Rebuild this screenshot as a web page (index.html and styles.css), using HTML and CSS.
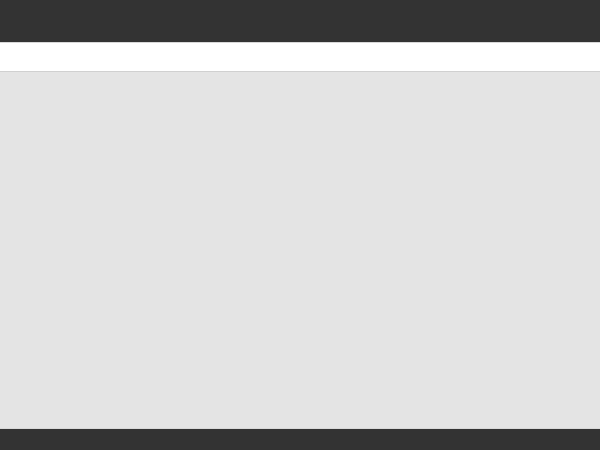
FILE: index.html
```html
<!DOCTYPE html>
<html>
<head>
<meta charset="utf-8">
<link rel="stylesheet" href="styles.css">
</head>
<body>
<div class="page">
  <header class="topbar"></header>
  <nav class="subbar"></nav>
  <main class="content"></main>
  <footer class="footer"></footer>
</div>
</body>
</html>
```
FILE: styles.css
```css
html, body {
  margin: 0;
  padding: 0;
  height: 100%;
  font-family: "Liberation Sans", Arial, sans-serif;
}
.page {
  display: flex;
  flex-direction: column;
  height: 450px;
  width: 600px;
  overflow: hidden;
}
.topbar {
  height: 42px;
  background: #333333;
  border-bottom: 1px solid #d8d8d8;
  flex: none;
}
.subbar {
  height: 28px;
  background: #ffffff;
  border-bottom: 1px solid #d0d0d0;
  flex: none;
}
.content {
  flex: 1;
  background: #e4e4e4;
}
.footer {
  height: 21px;
  background: #333333;
  border-top: 1px solid #d8d8d8;
  flex: none;
}
```
